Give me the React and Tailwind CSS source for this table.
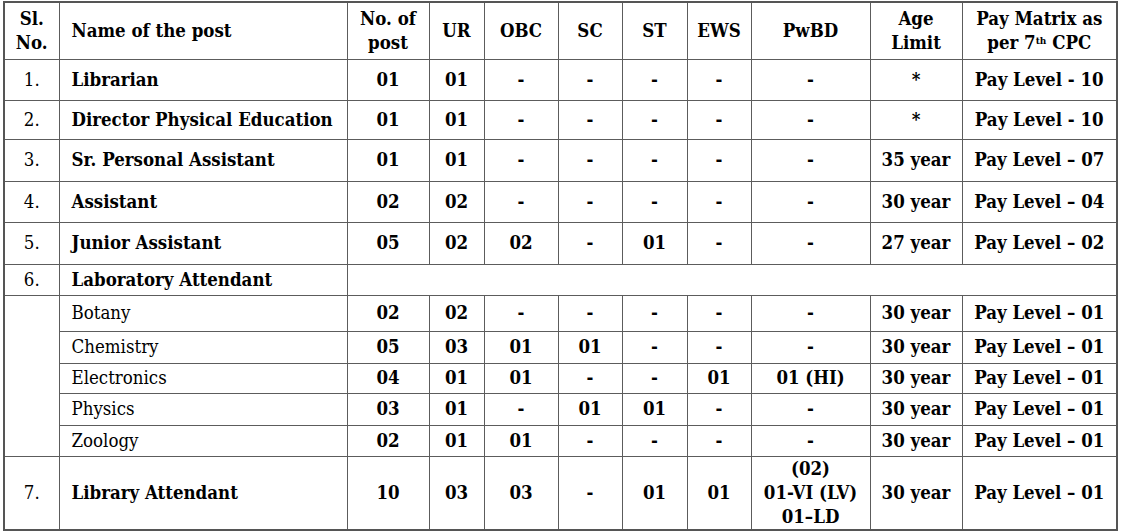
import React from 'react';

const COLS = [55, 288, 82, 55, 74, 64, 65, 64, 119, 92, 155];

const mainRows = [
  { sl: '1.', name: 'Librarian', cells: ['01', '01', '-', '-', '-', '-', '-', '*', 'Pay Level - 10'], h: 'h-[41px]' },
  { sl: '2.', name: 'Director Physical Education', cells: ['01', '01', '-', '-', '-', '-', '-', '*', 'Pay Level - 10'], h: 'h-[39px]' },
  { sl: '3.', name: 'Sr. Personal Assistant', cells: ['01', '01', '-', '-', '-', '-', '-', '35 year', 'Pay Level – 07'], h: 'h-[42px]' },
  { sl: '4.', name: 'Assistant', cells: ['02', '02', '-', '-', '-', '-', '-', '30 year', 'Pay Level – 04'], h: 'h-[41px]' },
  { sl: '5.', name: 'Junior Assistant', cells: ['05', '02', '02', '-', '01', '-', '-', '27 year', 'Pay Level – 02'], h: 'h-[42px]' },
];

const labRows = [
  { name: 'Botany', cells: ['02', '02', '-', '-', '-', '-', '-', '30 year', 'Pay Level – 01'], h: 'h-[36px]' },
  { name: 'Chemistry', cells: ['05', '03', '01', '01', '-', '-', '-', '30 year', 'Pay Level – 01'], h: 'h-[32px]' },
  { name: 'Electronics', cells: ['04', '01', '01', '-', '-', '01', '01 (HI)', '30 year', 'Pay Level – 01'], h: 'h-[30px]' },
  { name: 'Physics', cells: ['03', '01', '-', '01', '01', '-', '-', '30 year', 'Pay Level – 01'], h: 'h-[32px]' },
  { name: 'Zoology', cells: ['02', '01', '01', '-', '-', '-', '-', '30 year', 'Pay Level – 01'], h: 'h-[31px]' },
];

const td = 'border border-[#5c5c5c] text-center align-middle p-0';

const DataCells = ({ cells }) =>
  cells.map((c, i) => (
    <td key={i} className={`${td} font-bold`}>
      {c}
    </td>
  ));

export default function App() {
  return (
    <div className="bg-white w-[1121px] h-[531px] pt-[1px] pl-[3px] text-black" style={{ fontFamily: '"DejaVu Serif Condensed", "DejaVu Serif", "Liberation Serif", serif' }}>
      <table className="table-fixed border-collapse border-2 border-[#555] w-[1115px] text-[18.5px] leading-[24px]">
        <colgroup>
          {COLS.map((w, i) => (
            <col key={i} style={{ width: w }} />
          ))}
        </colgroup>
        <thead>
          <tr className="h-[57px] font-bold">
            <th className={td}>Sl.<br />No.</th>
            <th className={`${td} text-left pl-3`}>Name of the post</th>
            <th className={td}>No. of<br />post</th>
            <th className={td}>UR</th>
            <th className={td}>OBC</th>
            <th className={td}>SC</th>
            <th className={td}>ST</th>
            <th className={td}>EWS</th>
            <th className={td}>PwBD</th>
            <th className={td}>Age<br />Limit</th>
            <th className={td}>
              Pay Matrix as<br />per 7<sup className="text-[10px]">th</sup> CPC
            </th>
          </tr>
        </thead>
        <tbody>
          {mainRows.map((r) => (
            <tr key={r.sl} className={r.h}>
              <td className={td}>{r.sl}</td>
              <td className={`${td} text-left pl-3 font-bold`}>{r.name}</td>
              <DataCells cells={r.cells} />
            </tr>
          ))}
          <tr className="h-[31px]">
            <td className={td}>6.</td>
            <td className={`${td} text-left pl-3 font-bold`}>Laboratory Attendant</td>
            <td className={td} colSpan={9}></td>
          </tr>
          {labRows.map((r, i) => (
            <tr key={r.name} className={r.h}>
              {i === 0 && <td className={td} rowSpan={labRows.length}></td>}
              <td className={`${td} text-left pl-3`}>{r.name}</td>
              <DataCells cells={r.cells} />
            </tr>
          ))}
          <tr className="h-[73px]">
            <td className={td}>7.</td>
            <td className={`${td} text-left pl-3 font-bold`}>Library Attendant</td>
            <DataCells cells={['10', '03', '03', '-', '01', '01']} />
            <td className={`${td} font-bold`}>
              (02)<br />01-VI (LV)<br />01–LD
            </td>
            <DataCells cells={['30 year', 'Pay Level – 01']} />
          </tr>
        </tbody>
      </table>
    </div>
  );
}
